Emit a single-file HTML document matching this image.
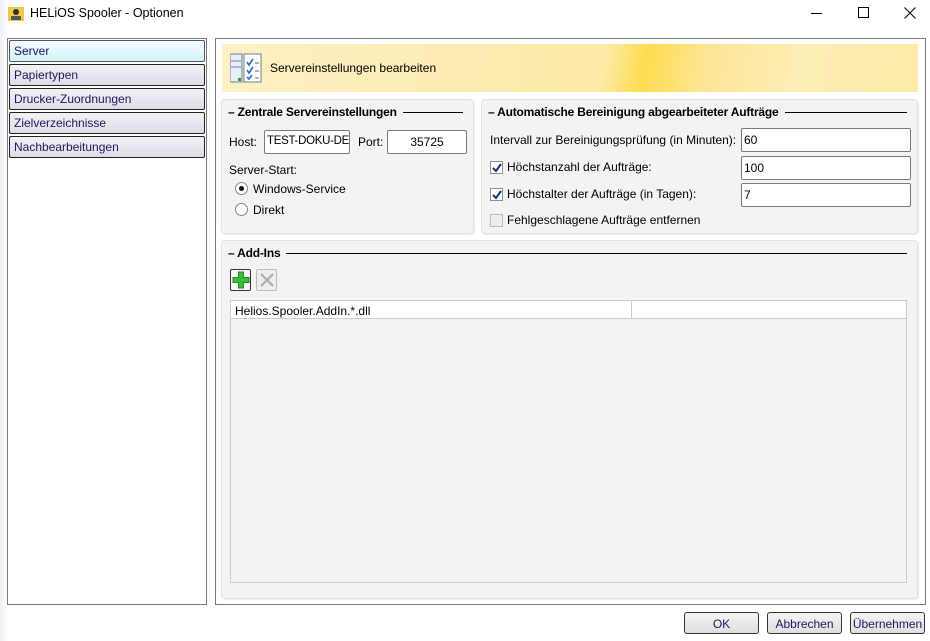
<!DOCTYPE html>
<html><head><meta charset="utf-8"><style>
*{box-sizing:border-box;margin:0;padding:0}
body{width:930px;height:641px;position:relative;overflow:hidden;background:linear-gradient(90deg,#eef0f6 0,#fff 8px,#fff 100%);font-family:"Liberation Sans",sans-serif;font-size:12px;color:#000}
.a{position:absolute}
.title{left:30px;top:6px;font-size:12.5px}
.left{left:7px;top:38px;width:200px;height:567px;border:1px solid #7a7a7a;background:#fff}
.item{position:absolute;left:1px;width:196px;height:22px;border:1px solid #222;border-radius:2px;background:linear-gradient(#f2f2f6,#dcdce6);padding:3px 0 0 4px;color:#1a1a60;font-size:12px}
.right{left:215px;top:38px;width:711px;height:567px;border:1px solid #7a7a7a;background:#fff}
.banner{left:222px;top:44px;width:696px;height:48px;background:linear-gradient(100deg,#fdf0c4 0,#fdeaa8 380px,#ffdc50 420px,#fde596 480px,#fdeeb4 570px,#fdebaa 100%)}
.grp{position:absolute;background:#f3f3f3;border-radius:3px;box-shadow:0 0 0 1px #e2e2e2,1px 1px 2px #ccc}
.gh{position:absolute;top:5px;left:6px;right:10px;display:flex;align-items:center;font-weight:bold;font-size:12px;white-space:nowrap;letter-spacing:-0.2px}
.gh i{flex:1;height:1px;background:#000;margin-left:6px}
.inp{position:absolute;height:24px;border:1px solid #7a7a7a;border-radius:2px;background:#fff;padding:4px 2px;font-size:12px;white-space:nowrap;overflow:hidden}
.cb{position:absolute;width:13px;height:13px;border:1px solid #8f8f8f;background:#fff}
.rb{position:absolute;width:13px;height:13px;border:1px solid #888;border-radius:50%;background:#fff}
.btn{position:absolute;top:612px;width:75px;height:22px;border:1px solid #333;border-radius:3px;background:linear-gradient(#f4f4f4,#dedede);text-align:center;padding-top:4px;color:#1a1a60}
</style></head><body>
<svg class="a" style="left:8px;top:6px" width="16" height="16"><rect x="0" y="1" width="16" height="14" fill="#f2c84b"/><circle cx="8" cy="6" r="3" fill="#333"/><rect x="3" y="10" width="10" height="4" fill="#555"/></svg>
<div class="a title">HELiOS Spooler - Optionen</div>
<div class="a" style="left:811px;top:13px;width:11px;height:1px;background:#000"></div>
<div class="a" style="left:858px;top:7px;width:11px;height:11px;border:1px solid #000"></div>
<svg class="a" style="left:904px;top:7px" width="12" height="12"><path d="M0.5 0.5L11.5 11.5M11.5 0.5L0.5 11.5" stroke="#000" stroke-width="1"/></svg>

<div class="a left">
<div class="item" style="top:1px;background:linear-gradient(#f4fdff,#d2f2fa);border-color:#555">Server</div>
<div class="item" style="top:25px">Papiertypen</div>
<div class="item" style="top:49px">Drucker-Zuordnungen</div>
<div class="item" style="top:73px">Zielverzeichnisse</div>
<div class="item" style="top:97px">Nachbearbeitungen</div>
</div>
<div class="a right"></div>
<div class="a banner"></div>
<svg class="a" style="left:230px;top:52px" width="32" height="32"><rect x="0" y="2" width="12" height="28" fill="#e8eef6" stroke="#6d7f95"/><line x1="1" y1="9" x2="11" y2="9" stroke="#6d7f95"/><line x1="1" y1="15" x2="11" y2="15" stroke="#6d7f95"/><rect x="8" y="26" width="3" height="3" fill="#2a2"/><rect x="14" y="2" width="17" height="28" fill="#fff" stroke="#6d7f95"/><path d="M17 10l2 3 4-6M17 18l2 3 4-6M17 25l2 2 3-4" stroke="#2a6fc9" stroke-width="1.6" fill="none"/><path d="M25 11h4M25 19h4M25 26h4" stroke="#666"/></svg>
<div class="a" style="left:270px;top:61px">Servereinstellungen bearbeiten</div>

<div class="grp" style="left:222px;top:100px;width:251px;height:133px">
<div class="gh">– Zentrale Servereinstellungen<i></i></div>
<div class="a" style="left:7px;top:35px">Host:</div>
<div class="inp" style="left:42px;top:30px;width:86px;font-size:11.5px;letter-spacing:-0.3px">TEST-DOKU-DE</div>
<div class="a" style="left:136px;top:35px">Port:</div>
<div class="inp" style="left:165px;top:30px;width:80px;text-align:center">35725</div>
<div class="a" style="left:7px;top:63px">Server-Start:</div>
<div class="rb" style="left:13px;top:82px"><div class="a" style="left:3px;top:3px;width:5px;height:5px;border-radius:50%;background:#111"></div></div>
<div class="a" style="left:31px;top:82px">Windows-Service</div>
<div class="rb" style="left:13px;top:103px"></div>
<div class="a" style="left:31px;top:103px">Direkt</div>
</div>

<div class="grp" style="left:482px;top:100px;width:435px;height:133px">
<div class="gh">– Automatische Bereinigung abgearbeiteter Aufträge<i></i></div>
<div class="a" style="left:8px;top:33px">Intervall zur Bereinigungsprüfung (in Minuten):</div>
<div class="inp" style="left:259px;top:28px;width:170px">60</div>
<div class="cb" style="left:8px;top:61px"><svg class="a" style="left:1px;top:1px" width="10" height="10"><path d="M1 5l3 3 5-7" stroke="#1a2f6e" stroke-width="2" fill="none"/></svg></div>
<div class="a" style="left:25px;top:60px">Höchstanzahl der Aufträge:</div>
<div class="inp" style="left:259px;top:56px;width:170px">100</div>
<div class="cb" style="left:8px;top:88px"><svg class="a" style="left:1px;top:1px" width="10" height="10"><path d="M1 5l3 3 5-7" stroke="#1a2f6e" stroke-width="2" fill="none"/></svg></div>
<div class="a" style="left:25px;top:87px">Höchstalter der Aufträge (in Tagen):</div>
<div class="inp" style="left:259px;top:83px;width:170px">7</div>
<div class="cb" style="left:8px;top:114px;background:#eee;border-color:#bbb"></div>
<div class="a" style="left:25px;top:113px">Fehlgeschlagene Aufträge entfernen</div>
</div>

<div class="grp" style="left:222px;top:241px;width:695px;height:357px">
<div class="gh">– Add-Ins<i></i></div>
<div class="a" style="left:8px;top:28px;width:21px;height:22px;border:1px solid #333;border-radius:2px;background:#f6f6f6"><svg class="a" style="left:1px;top:1px" width="18" height="18"><path d="M6.5 1h5v5.5h5.5v5h-5.5v5.5h-5v-5.5h-5.5v-5h5.5z" fill="#3bbd3b" stroke="#1f8a1f"/></svg></div>
<div class="a" style="left:34px;top:28px;width:21px;height:22px;border:1px solid #bbb;border-radius:2px;background:#eee"><svg class="a" style="left:2px;top:2px" width="16" height="16"><path d="M2 2L14 14M14 2L2 14" stroke="#aaa" stroke-width="2"/></svg></div>
<div class="a" style="left:8px;top:59px;width:677px;height:283px;border:1px solid #ccc;background:#f3f3f3">
<div class="a" style="left:0;top:0;width:675px;height:18px;background:#fff;border-bottom:1px solid #ccc"></div>
<div class="a" style="left:400px;top:0;width:1px;height:18px;background:#ccc"></div>
<div class="a" style="left:4px;top:3px">Helios.Spooler.AddIn.*.dll</div>
</div>
</div>

<div class="btn" style="left:684px">OK</div>
<div class="btn" style="left:767px">Abbrechen</div>
<div class="btn" style="left:850px">Übernehmen</div>
</body></html>
